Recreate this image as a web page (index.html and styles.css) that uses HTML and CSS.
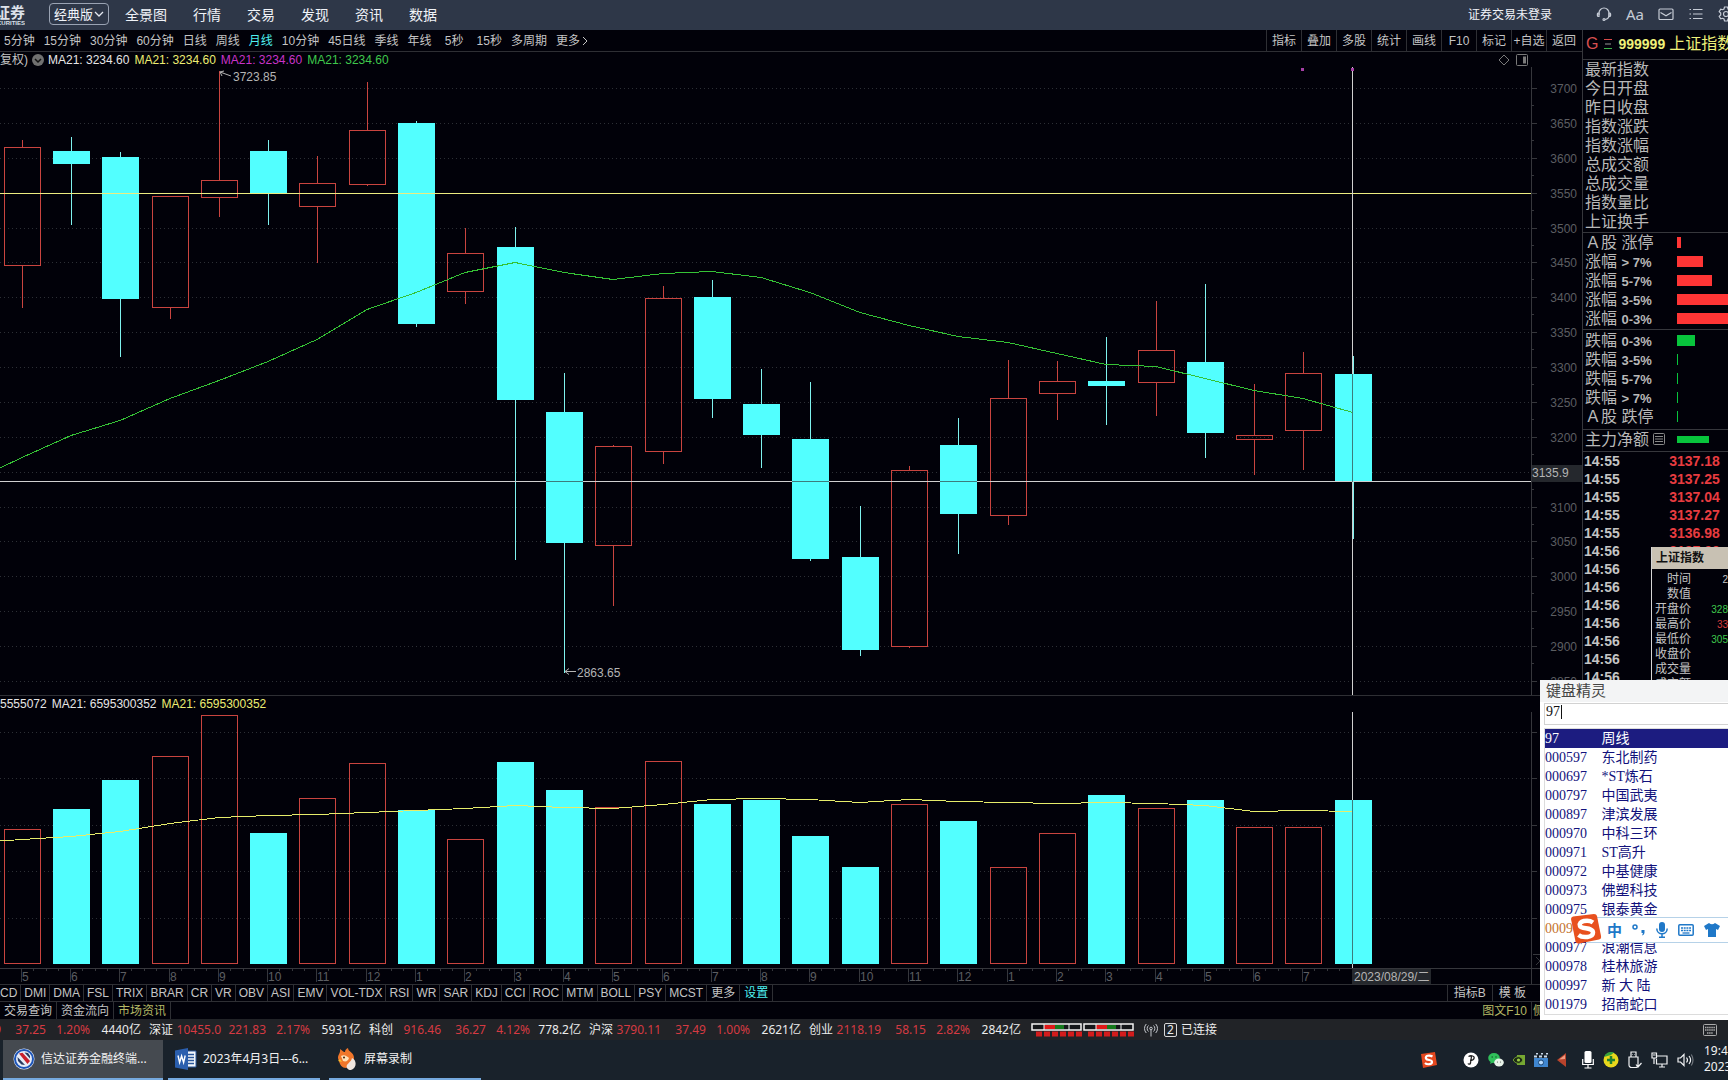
FILE: index.html
```html
<!DOCTYPE html>
<html lang="zh-CN">
<head>
<meta charset="utf-8">
<title>上证指数 999999</title>
<link rel="stylesheet" href="styles.css">
</head>
<body>
<header class="topbar">
  <div class="logo"><b>证券</b><small>SECURITIES</small></div>
  <label class="edition">
    <select aria-label="版本"><option>经典版</option></select>
    <svg width="10" height="6" viewBox="0 0 10 6"><path d="M1 1l4 4 4-4" fill="none" stroke="#e4e8f0" stroke-width="1.3"/></svg>
  </label>
  <nav class="menu">
    <a href="#">全景图</a><a href="#">行情</a><a href="#">交易</a><a href="#">发现</a><a href="#">资讯</a><a href="#">数据</a>
  </nav>
  <button class="login">证券交易未登录</button>
  <div class="top-icons">
    <button aria-label="客服"><svg width="16" height="16" viewBox="0 0 16 16" class="line"><path d="M3 9V7a5 5 0 0 1 10 0v2.500c0 2-1.500 3.500-4 4"/><path d="M3 7H2a1 1 0 0 0-.6 1v1.400a1 1 0 0 0 1 1H3zM13 7h1a1 1 0 0 1 .6 1v1.400a1 1 0 0 1-1 1H13z"/><circle cx="8" cy="13.500" r="1"/></svg></button>
    <button class="aa">Aa</button>
    <button aria-label="邮件"><svg width="16" height="16" viewBox="0 0 16 16" class="line"><rect x="1" y="3" width="14" height="10.500" rx="1"/><path d="M2.500 6.500L8 9.800l5.500-3.300"/></svg></button>
    <button aria-label="列表"><svg width="16" height="16" viewBox="0 0 16 16" class="line"><path d="M5 3.500h9.500M5 8h9.500M5 12.500h9.500M1.500 3.500h1.500M1.500 8h1.500M1.500 12.500h1.500"/></svg></button>
    <button aria-label="设置"><svg width="16" height="16" viewBox="0 0 16 16" class="line"><path d="M6.500 1h3l.5 2 1.300.7 2-.6 1.500 2.600-1.500 1.400v1.800l1.500 1.400-1.500 2.600-2-.6-1.300.7-.5 2h-3l-.5-2-1.300-.7-2 .6-1.500-2.600 1.500-1.400V7.100L1.200 5.700l1.500-2.600 2 .6L6 3z"/><circle cx="8" cy="8" r="2.500"/></svg></button>
  </div>
</header>

<main class="workspace">
  <section class="chart-area">
    <div class="toolbar">
      <nav class="periods">
        <button>5分钟</button><button>15分钟</button><button>30分钟</button><button>60分钟</button><button>日线</button><button>周线</button><button class="on">月线</button><button>10分钟</button><button>45日线</button><button>季线</button><button>年线</button><button class="short">5秒</button><button>15秒</button><button>多周期</button><button>更多<svg width="10" height="10" viewBox="0 0 10 10"><path d="M3 1l4 4-4 4" fill="none" stroke="#c4c4c4"/></svg></button>
      </nav>
      <div class="tools">
        <button>指标</button><button>叠加</button><button>多股</button><button>统计</button><button>画线</button><button>F10</button><button>标记</button><button>+自选</button><button>返回</button>
      </div>
    </div>
    <div class="legend">
      <span class="adj">复权)</span>
      <svg width="12" height="12" viewBox="0 0 12 12"><circle cx="6" cy="6" r="6" fill="#707070"/><path d="M3 5l3 3 3-3" fill="none" stroke="#111" stroke-width="1.500"/></svg>
      <span class="w">MA21: 3234.60</span><span class="y">MA21: 3234.60</span><span class="m">MA21: 3234.60</span><span class="g">MA21: 3234.60</span>
      <span class="legend-icons">
        <svg width="12" height="12" viewBox="0 0 12 12"><path d="M6 1l5 5-5 5-5-5z" fill="none" stroke="#7a7a7a"/></svg>
        <svg width="12" height="12" viewBox="0 0 12 12"><rect x=".5" y=".5" width="11" height="11" rx="1" fill="none" stroke="#7a7a7a"/><path d="M7 2.500h3v7H7z" fill="#7a7a7a"/></svg>
      </span>
    </div>
    <svg class="plot" id="price" viewBox="0 67 1582 628" height="628" preserveAspectRatio="xMinYMin meet"></svg>
    <div class="legend volume-legend"><span class="w">5555072</span><span class="w">MA21: 6595300352</span><span class="y">MA21: 6595300352</span></div>
    <svg class="plot" id="volume" viewBox="0 712 1582 272" height="272" preserveAspectRatio="xMinYMin meet"></svg>
    <div class="strip indicators">
      <div class="cells">
        <button>MACD</button><button>DMI</button><button>DMA</button><button>FSL</button><button>TRIX</button><button>BRAR</button><button>CR</button><button>VR</button><button>OBV</button><button>ASI</button><button>EMV</button><button>VOL-TDX</button><button>RSI</button><button>WR</button><button>SAR</button><button>KDJ</button><button>CCI</button><button>ROC</button><button>MTM</button><button>BOLL</button><button>PSY</button><button>MCST</button><button class="wide">更多</button><button class="wide on">设置</button>
      </div>
      <div class="cells end"><button>指标B</button><button>模 板</button></div>
    </div>
    <div class="strip info">
      <div class="cells"><button>交易查询</button><button>资金流向</button><button class="olive">市场资讯</button></div>
      <div class="cells end"><button class="olive">图文F10</button><button class="olive last">侧</button></div>
    </div>
  </section>

  <aside class="quote">
    <h1><span class="flag">G</span><svg width="8" height="12" viewBox="0 0 8 12"><path d="M0 1.500h8" stroke="#d84a4a"/><path d="M1 6h6" stroke="#999"/><path d="M0 10.500h8" stroke="#3cb44a"/></svg><b>999999</b><span class="name">上证指数</span></h1>
    <ul class="fields">
      <li>最新指数</li><li>今日开盘</li><li>昨日收盘</li><li>指数涨跌</li><li>指数涨幅</li><li>总成交额</li><li>总成交量</li><li>指数量比</li><li>上证换手</li>
    </ul>
    <ul class="dist up">
      <li><span>Ａ股 涨停</span><i style="width:4px"></i></li>
      <li><span>涨幅 <b>&gt; 7%</b></span><i style="width:26px"></i></li>
      <li><span>涨幅 <b>5-7%</b></span><i style="width:35px"></i></li>
      <li><span>涨幅 <b>3-5%</b></span><i style="width:60px"></i></li>
      <li><span>涨幅 <b>0-3%</b></span><i style="width:60px"></i></li>
    </ul>
    <ul class="dist down">
      <li><span>跌幅 <b>0-3%</b></span><i style="width:18px"></i></li>
      <li><span>跌幅 <b>3-5%</b></span><i style="width:1px"></i></li>
      <li><span>跌幅 <b>5-7%</b></span><i style="width:1px"></i></li>
      <li><span>跌幅 <b>&gt; 7%</b></span><i style="width:1px"></i></li>
      <li><span>Ａ股 跌停</span><i style="width:1px"></i></li>
    </ul>
    <ul class="dist down net">
      <li><span>主力净额<svg width="12" height="12" viewBox="0 0 12 12"><rect x=".5" y=".5" width="11" height="11" rx="1" fill="none" stroke="#888"/><path d="M2 3.500h8M2 6h8M2 8.500h8" stroke="#888"/></svg></span><i style="width:32px"></i></li>
    </ul>
    <table class="ticks">
      <tr><td>14:55</td><td>3137.18</td></tr>
      <tr><td>14:55</td><td>3137.25</td></tr>
      <tr><td>14:55</td><td>3137.04</td></tr>
      <tr><td>14:55</td><td>3137.27</td></tr>
      <tr><td>14:55</td><td>3136.98</td></tr>
      <tr><td>14:56</td><td>3137.09</td></tr>
      <tr><td>14:56</td><td></td></tr>
      <tr><td>14:56</td><td></td></tr>
      <tr><td>14:56</td><td></td></tr>
      <tr><td>14:56</td><td></td></tr>
      <tr><td>14:56</td><td></td></tr>
      <tr><td>14:56</td><td></td></tr>
      <tr><td>14:56</td><td></td></tr>
    </table>
    <div class="tip">
      <h2>上证指数</h2>
      <table>
        <tr><th>时间</th><td>2</td></tr>
        <tr><th>数值</th><td></td></tr>
        <tr><th>开盘价</th><td class="g">328</td></tr>
        <tr><th>最高价</th><td class="r">33</td></tr>
        <tr><th>最低价</th><td class="g">305</td></tr>
        <tr><th>收盘价</th><td></td></tr>
        <tr><th>成交量</th><td></td></tr>
        <tr><th>成交额</th><td></td></tr>
      </table>
    </div>
  </aside>
</main>

<footer class="ticker">
  <div class="cut"><div class="index"><span></span><em>9</em><em>37.25</em><em>1.20%</em><span>4440亿</span></div></div>
  <div class="index"><span>深证</span><em>10455.0</em><em>221.83</em><em>2.17%</em><span>5931亿</span></div>
  <div class="index"><span>科创</span><em>916.46</em><em>36.27</em><em>4.12%</em><span>778.2亿</span></div>
  <div class="index"><span>沪深</span><em>3790.11</em><em>37.49</em><em>1.00%</em><span>2621亿</span></div>
  <div class="index"><span>创业</span><em>2118.19</em><em>58.15</em><em>2.82%</em><span>2842亿</span></div>
  <svg class="meter" width="104" height="14" viewBox="0 0 104 14">
    <g id="m"><rect x="1" y="1" width="49" height="6" fill="#15171a" stroke="#f4f4f4" stroke-width="1.500"/><path d="M13 2h11v4H13z" fill="#e01818"/><path d="M24 2h9v4h-9z" fill="#157a1c"/><path d="M38 1v6M13 1v6" stroke="#f4f4f4"/><path d="M5 11h46" stroke="#d41c1c" stroke-width="5" stroke-dasharray="6 2"/></g>
    <use href="#m" x="52"/>
  </svg>
  <svg width="14" height="14" viewBox="0 0 14 14" class="line thin"><circle cx="7" cy="5.500" r="1.300"/><path d="M7 7v6.500M4.500 8.500a4 4 0 0 1 0-6M9.500 8.500a4 4 0 0 0 0-6M2.300 10a6.500 6.500 0 0 1 0-9M11.700 10a6.500 6.500 0 0 0 0-9"/></svg>
  <span class="count">2</span><span>已连接</span>
  <svg class="kbd" width="14" height="12" viewBox="0 0 14 12"><rect x=".5" y=".5" width="13" height="11" rx="1" fill="none" stroke="#aaa"/><path d="M2 3.500h10M2 6h10M4 9h6" stroke="#aaa" stroke-width="1.400" stroke-dasharray="1.500 .6"/></svg>
</footer>

<nav class="taskbar">
  <button class="task active"><svg width="22" height="22" viewBox="0 0 22 22"><circle cx="11" cy="11" r="10.500" fill="#e6ecf6"/><circle cx="11" cy="11" r="9" fill="none" stroke="#1d55b8" stroke-width="2"/><path d="M6 5.500l3.500-.8L17 13l-2.500 3z" fill="#c8202c"/><path d="M4.500 9l7.500 8-3.500-.5L5 13zM11.500 4.500l5.500 6V8l-2-3z" fill="#26395e"/></svg><span>信达证券金融终端...</span></button>
  <button class="task"><svg width="22" height="22" viewBox="0 0 22 22"><path d="M11 3h10v16H11z" fill="#f4f7fb" stroke="#2b579a"/><path d="M13 6.500h6M13 9.500h6M13 12.500h6M13 15.500h6" stroke="#2b579a" stroke-width="1.300"/><path d="M0 2.500L13 0v22L0 19.500z" fill="#2b5fae"/><path d="M3 7.500l1.600 7 2-6.500 2 6.500 1.600-7" fill="none" stroke="#fff" stroke-width="1.400"/></svg><span>2023年4月3日---6...</span></button>
  <button class="task"><svg width="22" height="22" viewBox="0 0 22 22"><path d="M3 13C0 7 5 6 4 1c3 2 3 3 5 3 0-2 1-3 3-4 0 4 6 4 6 10 0 5-3 9-8 10-4 0-6-3-7-7z" fill="#f0762a"/><path d="M11 20c-2-4 4-5 5-10 5 2 5 10-1 12-2 .3-3-.7-4-2z" fill="#efe6e0"/><path d="M5 8c3-2 6 0 8 2-1 3-3 4-6 3z" fill="#ffe1b8"/><circle cx="8" cy="9.500" r="1" fill="#45210c"/><path d="M4 11l-2 2 4 1z" fill="#f6c12c"/></svg><span>屏幕录制</span></button>
  <div class="tray">
    <svg width="18" height="18" viewBox="0 0 18 18"><path d="M1 3l14-2 2 13-14 3z" fill="#e5481f"/><path d="M12.500 5.500C9 3.500 5 5 6 7.500s6 .5 6 3.500c0 2.500-5 3-7 1" fill="none" stroke="#fff" stroke-width="2.200"/></svg>
    <svg class="first" width="16" height="16" viewBox="0 0 16 16"><circle cx="8" cy="8" r="7.500" fill="#fff"/><path d="M5.500 4.500C8 3 12 4 11 6.500 10.300 8.500 8 8.500 7 8.500M8.500 4.500L7.500 11c-.3 1.500-2 1.500-2.500.5" fill="none" stroke="#222" stroke-width="1.300"/></svg>
    <svg width="16" height="16" viewBox="0 0 16 16"><ellipse cx="6" cy="6" rx="5.800" ry="5" fill="#2fc05a"/><path d="M2 12l1-3 3 1z" fill="#2fc05a"/><ellipse cx="11" cy="10.500" rx="4.800" ry="4" fill="#e8f4ea"/><circle cx="4.200" cy="5" r=".8" fill="#175c2c"/><circle cx="8" cy="5" r=".8" fill="#175c2c"/><circle cx="9.500" cy="10" r=".6" fill="#555"/><circle cx="12.500" cy="10" r=".6" fill="#555"/></svg>
    <svg width="12" height="10" viewBox="0 0 12 10"><path d="M4 0h8v10H4z" fill="#76a832"/><path d="M0 5c3-4.500 8-4.500 10 0-2 4.500-7 4.500-10 0z" fill="#1c2a14" stroke="#76a832"/><circle cx="5.500" cy="5" r="1.600" fill="#9ccc48"/></svg>
    <svg width="14" height="14" viewBox="0 0 14 14"><path d="M0 5h14v9H0z" fill="#3f86cf"/><path d="M0 2.500h3v2H0zM5 2.500h3v2H5zM10 2.500h3v2h-3zM2 0h2v1.500H2zM7 0h2v1.500H7zM12 0h2v1.500h-2z" fill="#c8d8e8"/><circle cx="7" cy="9.500" r="2.500" fill="#b9dcff" stroke="#184472"/></svg>
    <svg width="10" height="14" viewBox="0 0 10 14"><path d="M0 7L9 0v14z" fill="#b8432c"/><path d="M2 6.500L8 2v4z" fill="#ee9a80"/></svg>
    <svg class="mic" width="12" height="18" viewBox="0 0 12 18"><rect x="2.500" y="0" width="7" height="12" rx="1.500" fill="#fff"/><path d="M.7 8v5.500h10.600V8M6 13.500V17M2.500 17h7" fill="none" stroke="#fff" stroke-width="1.200"/></svg>
    <svg width="16" height="16" viewBox="0 0 16 16"><circle cx="8" cy="8" r="7.500" fill="#e8d71c"/><path d="M1 5a7.500 7.500 0 0 1 10-4.500L8 3z" fill="#37a23c"/><path d="M8 4v8M4 8h8" stroke="#1f8130" stroke-width="2.500"/></svg>
    <svg width="14" height="18" viewBox="0 0 14 18" class="line white"><path d="M3 6V1h5v5M1 6h9v8a2.500 2.500 0 0 1-2.500 2.500h-4A2.500 2.500 0 0 1 1 14zM4.500 3.500h.5M6.500 3.500H7M8 13.500l2 2.500 3.500-4"/></svg>
    <svg width="17" height="16" viewBox="0 0 17 16" class="line white"><path d="M6 4h10v8H5.500V7M8 15h6M11 12v3M1 1h4.500v5H1zM3 6v6M2 3h2.500"/></svg>
    <svg width="17" height="14" viewBox="0 0 17 14" class="line white"><path d="M1 5h2.500L7 1.500v11L3.500 9H1zM9.500 4.500c1.200 1.500 1.200 3.500 0 5M12 3c2 2.500 2 5.500 0 8"/><path d="M14.300 1.500c2.200 3.500 2.200 7.500 0 11" opacity=".4"/></svg>
  </div>
  <div class="clock"><span>19:4</span><span>2023</span></div>
</nav>

<section class="wizard">
  <h2>键盘精灵</h2>
  <label class="entry"><input type="text" value="97" aria-label="代码"></label>
  <table>
    <tr class="sel"><td>97</td><td>周线</td></tr>
    <tr><td>000597</td><td>东北制药</td></tr>
    <tr><td>000697</td><td>*ST炼石</td></tr>
    <tr><td>000797</td><td>中国武夷</td></tr>
    <tr><td>000897</td><td>津滨发展</td></tr>
    <tr><td>000970</td><td>中科三环</td></tr>
    <tr><td>000971</td><td>ST高升</td></tr>
    <tr><td>000972</td><td>中基健康</td></tr>
    <tr><td>000973</td><td>佛塑科技</td></tr>
    <tr><td>000975</td><td>银泰黄金</td></tr>
    <tr class="hot"><td>0009</td><td></td></tr>
    <tr><td>000977</td><td>浪潮信息</td></tr>
    <tr><td>000978</td><td>桂林旅游</td></tr>
    <tr><td>000997</td><td>新 大 陆</td></tr>
    <tr><td>001979</td><td>招商蛇口</td></tr>
  </table>
  <div class="ime">
    <svg class="ime-logo" width="32" height="30" viewBox="0 0 32 30"><path d="M1 5q0-2 2-2.500L24 0q2.500 0 3 2l4 20q.5 3-2 3.500L9 29.500q-3 .5-3.500-2z" fill="#e8501e"/><path d="M23 8.500C18 5 8 7 10 12c1.500 3.500 13 1 13 6.500 0 5-10 6-14.500 2.500" fill="none" stroke="#fff" stroke-width="4.500"/></svg>
    <b>中</b>
    <svg width="14" height="12" viewBox="0 0 14 12"><circle cx="3" cy="3" r="2" fill="none" stroke="#1f78c8" stroke-width="1.500"/><path d="M9.500 6h3v3q-.5 2-2.500 2.500l1-2.500H9.500z" fill="#1f78c8"/></svg>
    <svg width="12" height="16" viewBox="0 0 12 16"><rect x="3" y="0" width="6" height="10" rx="3" fill="#1f78c8"/><path d="M.8 6.500c0 7 10.400 7 10.400 0M6 12v3M3 15.200h6" fill="none" stroke="#1f78c8" stroke-width="1.500"/></svg>
    <svg width="16" height="12" viewBox="0 0 16 12"><rect x=".8" y=".8" width="14.400" height="10.400" rx="1" fill="none" stroke="#1f78c8" stroke-width="1.500"/><path d="M3 4h10M3 6.500h10" stroke="#1f78c8" stroke-width="1.500" stroke-dasharray="2 .7"/><path d="M4.500 9h7" stroke="#1f78c8" stroke-width="1.300"/></svg>
    <svg width="16" height="14" viewBox="0 0 16 14"><path d="M5 0q3 2.500 6 0l5 3-2 4-2-1v8H4V6L2 7 0 3z" fill="#1f78c8"/></svg>
  </div>
</section>
<script src="chart.js"></script>
</body>
</html>
```
FILE: styles.css
```css
* { box-sizing: border-box; }
body {
  margin: 0;
  min-height: 100vh;
  overflow: hidden;
  position: relative;
  background: #010109;
  color: #c4c4c4;
  font: 12px/16px "Liberation Sans", "Noto Sans CJK SC", sans-serif;
}
button, select, input { font: inherit; color: inherit; background: none; border: 0; margin: 0; padding: 0; white-space: nowrap; }
ul { list-style: none; margin: 0; padding: 0; }
h1, h2 { margin: 0; font-weight: normal; }
table { border-collapse: collapse; }
td, th { padding: 0; }
th { font-weight: normal; }
a { color: inherit; text-decoration: none; }
svg { flex: none; }
.line { fill: none; stroke: #c6ccd6; stroke-width: 1.2; }
.line.white { stroke: #f0f2f4; }
.line.thin { stroke: #c4c7cc; stroke-width: 1; }

/* top bar */
.topbar { height: 30px; padding-bottom: 2px; display: flex; align-items: center; background: #2e3748; color: #f0f3f8; font-family: "Noto Sans CJK SC", sans-serif; overflow: hidden; }
.logo { width: 25px; margin-right: 24px; display: flex; flex-direction: column; align-items: flex-end; overflow: hidden; color: #dde2ea; }
.logo b { font-size: 15px; line-height: 17px; white-space: nowrap; }
.logo small { font: bold 6px/6px "Liberation Sans", sans-serif; }
.edition { width: 60px; height: 22px; border: 1px solid #9aa3b3; border-radius: 4px; display: flex; align-items: center; padding: 0 4px; font-size: 13px; }
.edition select { appearance: none; width: 40px; }
.menu { display: flex; gap: 26px; margin-left: 16px; font-size: 14px; flex: 1; }
.login { margin-right: 44px; }
.top-icons { display: flex; gap: 14px; align-items: center; width: 132px; }
.top-icons button { display: flex; flex: none; }
.top-icons .aa { font: 15px/16px "Noto Sans", sans-serif; color: #c6ccd6; }

/* workspace */
.workspace { display: grid; grid-template-columns: minmax(0, 1fr) 146px; }
.toolbar { height: 22px; border-bottom: 1px solid #2e2f34; display: flex; justify-content: space-between; padding-right: 1px; }
.periods { display: flex; gap: 9px; padding-left: 4px; align-items: center; }
.periods .short { width: 27px; }
.periods svg { vertical-align: -1px; }
.on { color: #4ff0f0; }
.tools { display: flex; }
.tools button { width: 35px; border-left: 1px solid #2e2f34; text-align: center; }
.legend { height: 15px; display: flex; align-items: center; gap: 5px; padding-right: 54px; white-space: nowrap; }
.legend .adj { width: 27px; }
.legend svg + .w { margin-left: -1px; }
.legend-icons { margin-left: auto; display: flex; gap: 6px; }
.volume-legend { height: 17px; border-top: 1px solid #2e2f34; }
.w { color: #e6e6e6; }
.y { color: #eded72; }
.m { color: #c833c8; }
.g { color: #3fc84c; }
.r { color: #d63c3c; }
.plot { display: block; width: 100%; font-size: 12px; shape-rendering: crispEdges; }
.grid { stroke: #2c2f35; stroke-dasharray: 1 3; }
.axis { stroke: #36373c; fill: none; }
.scale { fill: #5c5e62; }
.note { fill: #b4b4b4; }
.arrow { stroke: #b4b4b4; fill: none; shape-rendering: auto; }
.rise { stroke: #c9443f; fill: none; }
.fall { fill: #52ffff; }
.wick { stroke: #7ff2ee; }
.average { stroke: #35c235; fill: none; }
.average.vol { stroke: #e6ec6a; }
.level { stroke: #ecec80; }
.cross { stroke: #d0d0d0; }
.cross.over { stroke: #3c7c7c; }
.tag { fill: #25282d; }
.dot { fill: #a63fa6; }

/* strips below the charts */
.strip { display: flex; justify-content: space-between; border-top: 1px solid #2e2f34; overflow: hidden; padding-right: 42px; }
.indicators { height: 17px; }
.info { height: 18px; }
.cells { display: flex; }
.cells button { padding: 0 4px; border-right: 1px solid #2e2f34; line-height: 16px; }
.indicators button { padding: 0 3px; }
.indicators .wide { padding: 0 4px; }
.indicators .cells:first-child { margin-left: -21px; }
.indicators .end { padding-right: 8px; }
.indicators .end button { padding: 0 6px; border: 0; border-left: 1px solid #2e2f34; }
.cells .olive { color: #b4b865; }
.info .last { width: 8px; overflow: hidden; padding: 0 0 0 1px; border: 0; }

/* quote panel */
.quote { border-left: 1px solid #36373c; position: relative; overflow: hidden; height: 989px; }
.quote h1 { height: 30px; border-bottom: 1px solid #36373c; display: flex; align-items: center; gap: 6px; padding: 0 0 2px 3px; white-space: nowrap; color: #eef07a; font-size: 16px; }
.quote h1 b { font-size: 14px; }
.quote .flag { color: #d85050; }
.quote .name { margin-left: -2px; }
.fields, .dist { padding-left: 2px; font-size: 16px; line-height: 19px; border-bottom: 1px solid #36373c; color: #b8b8b8; }
.fields { height: 173px; }
.dist { height: 97px; }
.dist.down { height: 100px; padding-top: 1px; }
.dist.net { height: 22px; padding-top: 0; }
.dist li { display: flex; align-items: center; height: 19px; }
.dist span { width: 92px; flex: none; white-space: nowrap; }
.dist b { font-size: 13px; }
.dist i { height: 11px; flex: none; background: #ff3535; }
.dist.down i { background: #08c43c; }
.dist.net i { height: 7px; }
.dist.net svg { margin-left: 4px; }
.ticks { font-weight: bold; font-size: 14px; line-height: 18px; }
.ticks td { height: 18px; padding: 0 0 0 1px; }
.ticks td + td { padding: 0; width: 100px; text-align: right; color: #e83c40; }
.tip { position: absolute; top: 517px; right: 0; width: 77px; height: 150px; background: #010109; border-left: 1px solid #d6d6d6; overflow: hidden; }
.tip h2 { height: 22px; background: #c8c1b3; color: #111; font-size: 12px; font-weight: bold; line-height: 22px; padding-left: 4px; margin-bottom: 3px; }
.tip table { width: 100%; line-height: 15px; }
.tip th { width: 39px; text-align: right; }
.tip td { text-align: right; font-size: 10px; }

/* ticker */
.ticker { height: 21px; display: flex; align-items: center; background: #212327; color: #ececec; font-family: "Noto Sans", "Noto Sans CJK SC", sans-serif; white-space: nowrap; }
.cut { width: 149px; display: flex; justify-content: flex-end; overflow: hidden; }
.index { width: 220px; flex: none; display: grid; grid-template-columns: 24px 48px 45px 44px 51px; text-align: right; }
.index em { font-style: normal; color: #d63a42; }
.meter { margin: 0 9px 0 2px; }
.count { border: 1px solid #d8d8d8; border-radius: 2px; width: 13px; line-height: 12px; text-align: center; margin: 0 4px 0 6px; }
.kbd { margin: 0 11px 0 auto; }

/* taskbar */
.taskbar { height: 40px; display: flex; align-items: stretch; background: #19222b; padding-left: 3px; color: #f2f2f2; font-family: "Noto Sans", "Noto Sans CJK SC", sans-serif; }
.task { width: 152px; border-bottom: 2px solid #76aadf; display: flex; align-items: center; gap: 6px; padding: 0 7px; margin-right: 9px; }
.task.active { width: 160px; background: #454a50; padding: 0 10px; margin-right: 5px; }
.tray { margin-left: auto; display: flex; align-items: center; gap: 9px; }
.tray .first { margin-left: 16px; }
.tray .mic { margin-left: 6px; }
.clock { width: 34px; padding: 3px 0 0 10px; overflow: hidden; display: flex; flex-direction: column; }

/* keyboard wizard */
.wizard { position: absolute; right: 0; top: 680px; width: 188px; height: 340px; background: #fff; color: #12127c; padding: 0 0 4px 4px; font: 14px/19px "Liberation Serif", "Noto Sans CJK SC", serif; }
.wizard h2 { margin-left: -4px; padding-left: 6px; height: 22px; line-height: 22px; background: #f3f4f5; color: #444; font-size: 15px; }
.entry { display: block; position: relative; height: 22px; border: 1px solid #d2d2d2; margin: 1px 0 3px; border-right: 0; color: #111; }
.entry input { width: 100%; height: 14px; padding-left: 1px; display: block; outline: none; }
.entry::after { content: ""; position: absolute; left: 16px; top: 1px; width: 1px; height: 14px; background: #111; }
.wizard table { width: 100%; border: 1px solid #dcdcdc; border-right: 0; }
.wizard td { height: 19px; padding-top: 1px; line-height: 18px; }
.wizard td:first-child { width: 57px; }
.wizard .sel { background: #1c1c80; color: #fff; }
.wizard .hot { color: #c4722c; }
.ime { position: absolute; left: 46px; right: 0; top: 237px; height: 26px; background: #fff; border: 1px solid #b6d2e8; border-right: 0; display: flex; align-items: center; gap: 10px; padding-left: 20px; color: #1f78c8; }
.ime b { font: bold 15px/20px "Noto Sans CJK SC", sans-serif; }
.ime-logo { position: absolute; left: -17px; top: -4px; }
```
FILE: chart.js
```js
// Each candle: left edge, high, body top, body bottom, low, volume top, 1 = falling month
const candles = [
  [4, 140, 147, 266, 308, 829, 0], [53, 137, 151, 164, 225, 809, 1],
  [102, 152, 157, 299, 357, 780, 1], [152, 196, 196, 308, 319, 756, 0],
  [201, 71, 180, 198, 217, 715, 0], [250, 140, 151, 193, 225, 833, 1],
  [299, 156, 183, 207, 263, 798, 0], [349, 82, 130, 185, 186, 763, 0],
  [398, 121, 123, 324, 327, 810, 1], [447, 228, 253, 292, 304, 839, 0],
  [497, 227, 247, 400, 560, 762, 1], [546, 373, 412, 543, 673, 790, 1],
  [595, 445, 446, 546, 606, 807, 0], [645, 286, 298, 452, 464, 761, 0],
  [694, 280, 297, 399, 418, 804, 1], [743, 369, 404, 435, 468, 800, 1],
  [792, 382, 439, 559, 561, 836, 1], [842, 506, 557, 650, 656, 867, 1],
  [891, 466, 470, 647, 648, 804, 0], [940, 418, 445, 514, 554, 821, 1],
  [990, 360, 398, 516, 525, 867, 0], [1039, 361, 381, 394, 420, 833, 0],
  [1088, 337, 381, 386, 425, 795, 1], [1138, 301, 350, 383, 416, 808, 0],
  [1187, 284, 362, 433, 458, 800, 1], [1236, 384, 435, 440, 475, 827, 0],
  [1285, 352, 373, 431, 470, 827, 0], [1335, 356, 374, 482, 539, 800, 1]
];
const priceAverage = [457, 435, 420, 398, 380, 361, 339, 309, 292, 272, 262, 272, 279, 273, 271, 277, 292, 312, 325, 336, 342, 353, 364, 366, 378, 390, 398, 412];
const volumeAverage = [839, 836, 831, 823, 817, 815, 814, 812, 810, 808, 805, 807, 808, 804, 799, 798, 799, 802, 799, 801, 802, 803, 802, 803, 805, 811, 810, 811];
const BODY = 37, EDGE = 1531, BASE = 964;

const line = (c, x1, y1, x2, y2) => `<path class="${c}" d="M${x1} ${y1}L${x2} ${y2}"/>`;
const text = (c, x, y, s, anchor = 'start') => `<text class="${c}" x="${x}" y="${y}" text-anchor="${anchor}">${s}</text>`;
const body = (x, top, bottom, falling) => falling
  ? `<rect class="fall" x="${x}" y="${top}" width="${BODY}" height="${bottom - top}"/>`
  : `<rect class="rise" x="${x + .5}" y="${top + .5}" width="${BODY - 1}" height="${bottom - top - 1}"/>`;
const average = (c, first, values) =>
  `<polyline class="average ${c}" points="0,${first} ${values.map((v, i) => `${candles[i][0] + 18},${v + .5}`).join(' ')}"/>`;

let price = '';
for (let i = 0; i < 18; i++) {
  const y = Math.round(88 + i * 34.88) + .5;
  price += line('grid', 0, y, EDGE, y) + line('axis', EDGE, y, EDGE + 6, y);
  price += line('axis', EDGE, y + 17, EDGE + 3, y + 17);
  if (i !== 11) price += text('scale', 1577, y + 4, 3700 - i * 50, 'end');
}
price += line('axis', EDGE + .5, 67, EDGE + .5, 695);
for (const [x, high, top, bottom, low, , falling] of candles) {
  const c = falling ? 'wick' : 'rise', cx = x + 18.5;
  price += line(c, cx, high, cx, top) + line(c, cx, bottom, cx, low) + body(x, top, bottom, falling);
}
price += average('', 468, priceAverage);
price += line('level', 0, 193.5, EDGE, 193.5) + line('cross', 0, 481.5, EDGE, 481.5) + line('cross', 1352.5, 67, 1352.5, 695);
for (const [x, , top, bottom, , , falling] of candles)
  if (falling && top < 481 && bottom > 482) price += line('cross over', x, 481.5, x + BODY, 481.5);
price += line('cross over', 1352.5, 374, 1352.5, 482);
price += `<rect class="dot" x="1301" y="68" width="3" height="3"/><rect class="dot" x="1351" y="68" width="3" height="3"/>`;
price += `<path class="arrow" d="M231 76l-11-4m4-1l-4 1 2 4"/>` + text('note', 233, 81, '3723.85');
price += `<path class="arrow" d="M576 671.500h-11m4-3l-4 3 4 3"/>` + text('note', 577, 677, '2863.65');
price += `<rect class="tag" x="1532" y="465" width="50" height="17"/>` + text('note', 1532, 477, '3135.9');
document.getElementById('price').innerHTML = price;

let volume = '';
for (const y of [732.5, 778.5, 825.5, 871.5, 918.5])
  volume += line('grid', 0, y, EDGE, y) + line('axis', EDGE, y, EDGE + 6, y);
volume += line('axis', EDGE + .5, 712, EDGE + .5, 984) + line('axis', 0, 968.5, 1582, 968.5);
candles.forEach(([x, , , , , top, falling], i) => {
  volume += body(x, top, BASE, falling);
  if (i < 27) volume += line('axis', x + 17.5, 968, x + 17.5, 982) + text('scale', x + 18, 981, (i + 4) % 12 + 1);
  if (i < 27) for (const step of [12, 25, 37]) volume += line('axis', x + 17.5 + step, 968, x + 17.5 + step, 971);
});
volume += average('vol', 841, volumeAverage);
volume += line('cross', 1352.5, 712, 1352.5, 968) + line('cross over', 1352.5, 800, 1352.5, BASE);
volume += `<rect class="tag" x="1352" y="969" width="79" height="15"/>` + text('note', 1354, 981, '2023/08/29/二');
volume += `<path class="axis" d="M1533 954.500h14v13M1536 957l8 8m0-8l-8 8"/>`;
document.getElementById('volume').innerHTML = volume;
```
